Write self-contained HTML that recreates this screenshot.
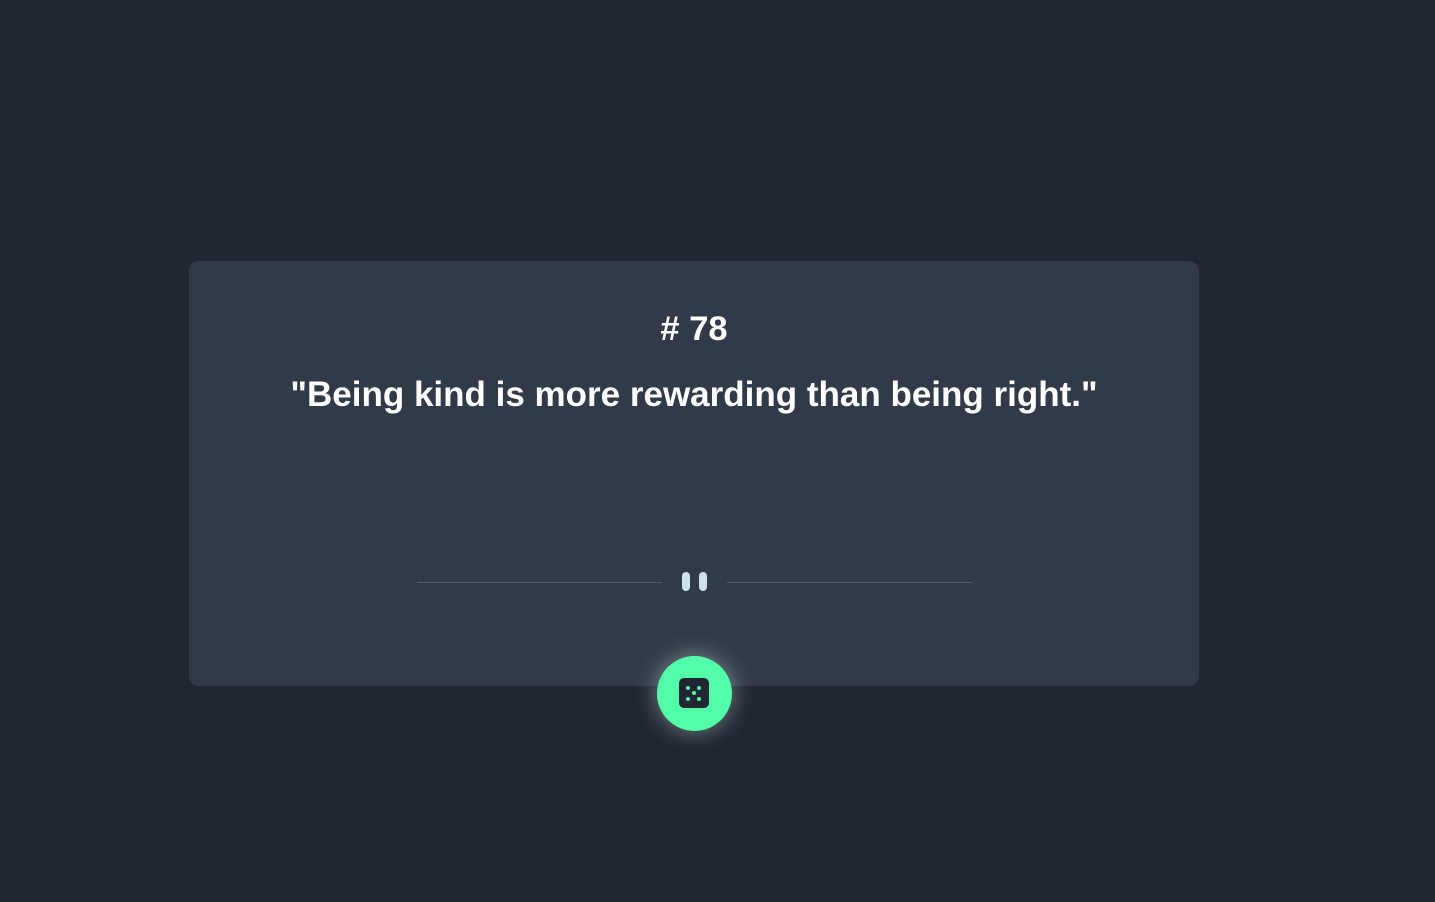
<!DOCTYPE html>
<html><head><style>
html,body{margin:0;padding:0;width:1435px;height:902px;background:#202632;font-family:"Liberation Sans",Arial,sans-serif;overflow:hidden}
.card{position:absolute;left:189px;top:261px;width:1010px;height:425px;background:#313a49;border-radius:10px}
.num{position:absolute;left:189px;width:1010px;top:309px;text-align:center;color:#fff;font-weight:bold;font-size:34.5px;line-height:40px}
.q{position:absolute;left:139px;width:1110px;top:374px;text-align:center;color:#fff;font-weight:bold;font-size:35px;line-height:42px;white-space:nowrap}
.line{position:absolute;top:582px;height:1px;background:#4f5d73;width:245px}
.bar{position:absolute;top:572px;width:8px;height:19px;border-radius:4px;background:#cee3e9}
.btn{position:absolute;left:657px;top:656px;width:75px;height:75px;border-radius:50%;background:#52ffa8;box-shadow:0 0 24px rgba(220,255,235,0.45)}
.dice{position:absolute;left:679px;top:678px;width:30px;height:30px;border-radius:5px;background:#202632}
.d{position:absolute;width:4px;height:4px;border-radius:50%;background:#52ffa8}
</style></head><body>
<div class="card"></div>
<div class="num"># 78</div>
<div class="q">"Being kind is more rewarding than being right."</div>
<div class="line" style="left:417px"></div>
<div class="line" style="left:727px"></div>
<div class="bar" style="left:682px"></div>
<div class="bar" style="left:699px"></div>
<div class="btn"></div>
<div class="dice">
<div class="d" style="left:7px;top:8px"></div><div class="d" style="left:18px;top:8px"></div>
<div class="d" style="left:12.5px;top:13px"></div>
<div class="d" style="left:7px;top:19px"></div><div class="d" style="left:18px;top:19px"></div>
</div>
</body></html>
